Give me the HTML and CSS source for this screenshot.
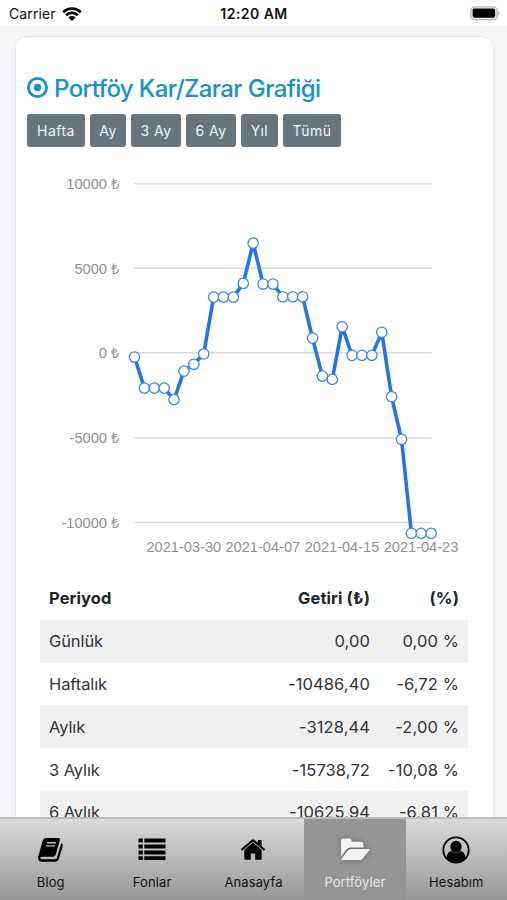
FILE: index.html
```html
<!DOCTYPE html>
<html lang="tr">
<head>
    <meta charset="UTF-8">
    <meta name="viewport" content="width=device-width, initial-scale=1.0">
    <title>Portföyler</title>
    <link rel="stylesheet" href="styles.css">
</head>
<body>
    <div class="phone">
        <header class="status-bar">
            <div class="carrier">
                <span>Carrier</span>
                <svg width="20" height="16" viewBox="0 0 20 16">
                    <path d="M1.2 6.2C6 1.4 14 1.4 18.8 6.2M4.1 9.2C7.4 6 12.6 6 15.9 9.2" fill="none" stroke="#000" stroke-width="2.7"/>
                    <path d="M10 15L6.4 11.5Q10 8.7 13.6 11.5Z"/>
                </svg>
            </div>
            <span class="clock">12:20 AM</span>
            <svg class="battery" width="31" height="15" viewBox="0 0 31 15">
                <rect x=".9" y=".9" width="26.2" height="12.6" rx="3.6" fill="#fff" stroke="#b5b5b5" stroke-width="1.4"/>
                <rect x="2.6" y="2.6" width="22.6" height="9.2" rx="1.8"/>
                <path d="M28.4 4.8Q30.8 7.2 28.4 9.6Z" fill="#aaa"/>
            </svg>
        </header>

        <main class="content">
            <section class="card">
                <h1 class="card-title">
                    <svg width="22" height="22" viewBox="0 0 22 22">
                        <circle cx="10.5" cy="10.5" r="9.1" fill="none" stroke="#1592cc" stroke-width="2.8"/>
                        <circle cx="10.5" cy="10.5" r="3.7" fill="#1592cc"/>
                    </svg>
                    <span>Portföy Kar/Zarar Grafiği</span>
                </h1>

                <div class="periods">
                    <button class="btn btn-hafta">Hafta</button>
                    <button class="btn btn-ay">Ay</button>
                    <button class="btn btn-3ay">3 Ay</button>
                    <button class="btn btn-6ay">6 Ay</button>
                    <button class="btn btn-yil">Yıl</button>
                    <button class="btn btn-tumu">Tümü</button>
                </div>

                <svg class="chart" width="440" height="400" viewBox="40 170 440 400">
                    <g class="grid">
                        <path d="M134.5 183.7H431.5M134.5 268.2H431.5M134.5 352.8H431.5M134.5 438H431.5M134.5 522.4H431.5"/>
                    </g>
                    <g class="y-labels">
                        <text x="119" y="189">10000 ₺</text>
                        <text x="119" y="273.5">5000 ₺</text>
                        <text x="119" y="358">0 ₺</text>
                        <text x="119" y="443.3">-5000 ₺</text>
                        <text x="119" y="527.8">-10000 ₺</text>
                    </g>
                    <g class="x-labels">
                        <text x="183.8" y="552">2021-03-30</text>
                        <text x="262.8" y="552">2021-04-07</text>
                        <text x="342" y="552">2021-04-15</text>
                        <text x="421" y="552">2021-04-23</text>
                    </g>
                    <polyline class="line" id="line"/>
                    <g class="dots" id="dots"></g>
                </svg>

                <table class="returns">
                    <thead>
                        <tr><th>Periyod</th><th>Getiri (₺)</th><th>(%)</th></tr>
                    </thead>
                    <tbody>
                        <tr><td>Günlük</td><td>0,00</td><td>0,00 %</td></tr>
                        <tr><td>Haftalık</td><td>-10486,40</td><td>-6,72 %</td></tr>
                        <tr><td>Aylık</td><td>-3128,44</td><td>-2,00 %</td></tr>
                        <tr><td>3 Aylık</td><td>-15738,72</td><td>-10,08 %</td></tr>
                        <tr><td>6 Aylık</td><td>-10625,94</td><td>-6,81 %</td></tr>
                    </tbody>
                </table>
            </section>
        </main>

        <nav class="tab-bar">
            <a class="tab">
                <svg width="28" height="28" viewBox="0 0 28 28">
                    <path fill-rule="evenodd" d="M9 2H21Q23.4 2 22.8 4.3L18.8 18.6Q18.2 20.8 16 20.8H4.6Q3.1 20.8 3.5 22.2Q3.8 23.2 5.3 23.2H18.3Q19.5 23.2 19.9 22L24.1 7.2Q26.4 7.8 25.8 9.9L21.6 23.4Q20.8 25.8 18.4 25.8H4.8Q1.2 25.8 1 21.8L5.4 5.5Q6.3 2 9 2ZM10.2 6L9.8 7.4H18.6L19 6ZM9.3 9.2L8.9 10.6H17.7L18.1 9.2Z"/>
                </svg>
                <span>Blog</span>
            </a>
            <a class="tab">
                <svg width="28" height="28" viewBox="0 0 28 28">
                    <path d="M.5 2.5h4.3v4H.5zM6.3 2.5h21.2v4H6.3zM.5 8.5h4.3v4H.5zM6.3 8.5h21.2v4H6.3zM.5 14.4h4.3v4H.5zM6.3 14.4h21.2v4H6.3zM.5 20.3h4.3v3.8H.5zM6.3 20.3h21.2v3.8H6.3z"/>
                </svg>
                <span>Fonlar</span>
            </a>
            <a class="tab">
                <svg width="28" height="28" viewBox="0 0 28 28">
                    <path d="M14 6.5L22.7 14V22.5Q22.7 23.7 21.5 23.7H16.2V17.4H11.8V23.7H6.5Q5.3 23.7 5.3 22.5V14Z"/>
                    <path d="M1.8 13.3L12.8 3.8Q14 2.9 15.2 3.8L18.9 7V4H22.6V10.1L26.2 13.3L24.9 14.8L14 5.5L3.1 14.8Z"/>
                </svg>
                <span>Anasayfa</span>
            </a>
            <a class="tab active">
                <svg width="30" height="28" viewBox="0 0 30 28">
                    <path d="M1 20.5V4.7Q1 2.5 3.2 2.5H9.5Q11.7 2.5 11.7 4.7V5.8H21.3Q23.5 5.8 23.5 8V11.6H10.8Q8 11.6 6.2 13.8Z"/>
                    <path d="M7.3 14.9Q8.9 13 11.3 13H28.5Q30 13 29.1 14.4L22.9 22.2Q21.4 24.1 19 24.1H2.2Q.6 24.1 1.5 22.7Z"/>
                </svg>
                <span>Portföyler</span>
            </a>
            <a class="tab">
                <svg width="28" height="28" viewBox="0 0 28 28">
                    <circle cx="14" cy="14" r="12.7" fill="none" stroke="#000" stroke-width="1.8"/>
                    <ellipse cx="14" cy="10.8" rx="5.7" ry="6"/>
                    <path d="M4.5 21.2Q5.7 15.5 9.2 15Q14 19.2 18.8 15Q22.3 15.5 23.5 21.2Q19.8 26 14 26T4.5 21.2Z"/>
                </svg>
                <span>Hesabım</span>
            </a>
        </nav>
    </div>

    <script>
        // daily profit/loss in TL
        const values = [
            -250, -2085, -2085, -2085, -2765, -1080, -680, -70, 3290, 3290, 3290,
            4100, 6480, 4060, 4060, 3310, 3310, 3310, 870, -1375, -1570, 1540,
            -150, -150, -150, 1210, -2595, -5110, -10660, -10660, -10660
        ];
        const points = values.map((v, i) => [134.5 + i * 9.89, 352.8 - v * 0.01693]);

        document.getElementById('line').setAttribute('points', points.join(' '));
        document.getElementById('dots').innerHTML = points
            .map(([x, y]) => `<circle cx="${x}" cy="${y}" r="5.2"/>`)
            .join('');
    </script>
</body>
</html>
```
FILE: styles.css
```css
* {
    box-sizing: border-box;
}

body {
    margin: 0;
    font-family: Inter, "Noto Sans", sans-serif;
    color: #212529;
}

.phone {
    height: 900px;
    display: flex;
    flex-direction: column;
    overflow: hidden;
    background: #f3f5f7;
}

.status-bar {
    height: 26px;
    flex: none;
    display: grid;
    grid-template-columns: 1fr auto 1fr;
    align-items: center;
    padding: 1px 6px 0 9px;
    background: #fff;
    font-size: 14px;
    color: #111;
}

.carrier {
    display: flex;
    align-items: center;
    gap: 6px;
    letter-spacing: 0.1px;
}

.clock {
    font-weight: 600;
    letter-spacing: 0.45px;
    margin-right: 2px;
}

.battery {
    justify-self: end;
}

.content {
    flex: 1;
    min-height: 0;
    overflow: hidden;
    padding: 10px 13px 0 15px;
}

.card {
    height: 860px;
    padding: 36px 11px 0;
    background: #fff;
    border: 1px solid #e6e9ec;
    border-radius: 12px;
}

.card-title {
    display: flex;
    align-items: center;
    gap: 5px;
    height: 30px;
    margin: 0;
    font-size: 24px;
    font-weight: 500;
    letter-spacing: -0.6px;
    white-space: nowrap;
    color: #1592cc;
}

.periods {
    display: flex;
    gap: 5px;
    height: 33px;
    margin-top: 11px;
}

.btn {
    padding: 0;
    border: none;
    border-radius: 3px;
    background: #69757d;
    color: #f2f4f5;
    font-family: inherit;
    font-size: 14px;
    letter-spacing: 0.5px;
}

.btn-hafta { width: 58px; }
.btn-ay { width: 36px; }
.btn-3ay { width: 50px; }
.btn-6ay { width: 50px; }
.btn-yil { width: 37px; }
.btn-tumu { width: 58px; }

.chart {
    display: block;
    margin: 23px 0 0 13px;
    font-family: "Liberation Sans", Arial, sans-serif;
    font-size: 14.6px;
}

.grid path {
    stroke: #d9d9d9;
    stroke-width: 1.5;
}

.y-labels text {
    text-anchor: end;
    fill: #909090;
}

.x-labels text {
    text-anchor: middle;
    fill: #909090;
}

.line {
    fill: none;
    stroke: #2474e8;
    stroke-width: 3.6;
    stroke-linejoin: round;
}

.dots circle {
    fill: #fff;
    stroke: #3d83ee;
    stroke-width: 1.3;
}

.returns {
    width: 428px;
    margin: 7px 0 0 13px;
    table-layout: fixed;
    border-collapse: collapse;
    font-size: 16.5px;
}

.returns th,
.returns td {
    height: 42.8px;
    padding: 0 9px;
    text-align: right;
    white-space: nowrap;
}

.returns td {
    color: #303336;
    letter-spacing: 0.1px;
}

.returns th {
    font-weight: 700;
    letter-spacing: 0.1px;
}

.returns th:first-child,
.returns td:first-child {
    text-align: left;
}

.returns td:first-child {
    letter-spacing: -0.1px;
}

.returns th:last-child {
    width: 89px;
}

.returns tbody tr:nth-child(odd) {
    background: #f1f1f1;
}

.tab-bar {
    height: 83px;
    flex: none;
    display: grid;
    grid-template-columns: repeat(5, 1fr);
    border-top: 2px solid #bdbdbd;
    background: linear-gradient(#dadada, #979797);
}

.tab {
    display: flex;
    flex-direction: column;
    align-items: center;
    padding-top: 17px;
    font-size: 13px;
    letter-spacing: 0.1px;
    color: #111;
}

.tab span {
    margin-top: 10px;
    line-height: 16px;
}

.tab.active {
    background: #959595;
    color: #e5e5e5;
}

.tab.active svg {
    fill: #f3f3f3;
    filter: drop-shadow(0 0 3px #666);
}
```
